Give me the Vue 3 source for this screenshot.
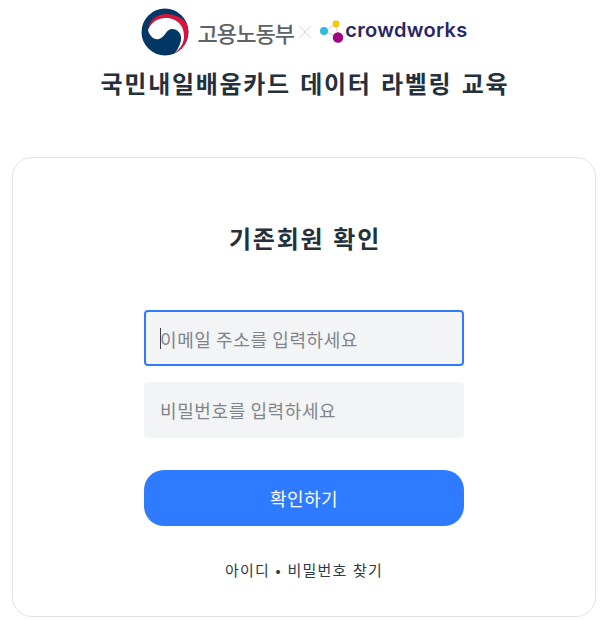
<script setup>
import { ref } from 'vue'

const email = ref('')
const password = ref('')
</script>

<template>
  <div class="page">
    <header class="head">
      <div class="logos">
        <svg class="emblem" width="48" height="48" viewBox="0 0 48 48">
          <circle cx="24" cy="24" r="23.500" fill="#003764" />
          <path d="M6.500 21C9 11 17 6 25 6C33 6 40 9 45 14A23.500 23.500 0 0 1 34 45.200C40 40 43.500 34 43 27.500C42 17 34 10 25 10C17 10 10 14 6.500 21z" fill="#d7143c" />
          <path d="M7 22C10 14 17 10 25 10C35 10 43 17 43 27.500C43.500 34 40 40 34 45C38 39.500 40.500 34 40 29C39.500 24 35 20.500 30 21C25 22 24 29 18 31C13 32.500 8.500 28 7 22z" fill="#fff" />
        </svg>
        <span class="moel">고용노동부</span>
        <svg class="times" width="14" height="14" viewBox="0 0 14 14">
          <path d="M1 1l12 12M13 1L1 13" stroke="#d4d6d9" stroke-width="1" fill="none" />
        </svg>
        <svg class="dots" width="26" height="26" viewBox="0 0 26 26">
          <path d="M5 13L17 6M5 13l14 6.500M17 6l2 13.500" stroke="#d9d3e2" stroke-width="1" fill="none" />
          <circle cx="5" cy="13" r="4" fill="#2fbcd6" />
          <circle cx="17" cy="6" r="3.400" fill="#f6c800" />
          <circle cx="19" cy="19.500" r="5.200" fill="#a0057f" />
        </svg>
        <span class="crowd">crowdworks</span>
      </div>
      <h1 class="course">국민내일배움카드 데이터 라벨링 교육</h1>
    </header>

    <main class="card">
      <h2 class="title">기존회원 확인</h2>
      <form class="form" @submit.prevent>
        <div class="field">
          <input v-model="email" class="input focused" type="text" placeholder="이메일 주소를 입력하세요" />
          <span class="caret"></span>
        </div>
        <div class="field">
          <input v-model="password" class="input" type="password" placeholder="비밀번호를 입력하세요" />
        </div>
        <button class="submit" type="submit">확인하기</button>
      </form>
      <a class="find" href="#" @click.prevent>아이디 • 비밀번호 찾기</a>
    </main>
  </div>
</template>

<style scoped>
.page {
  width: 608px;
  box-sizing: border-box;
  padding: 8px 12px 0;
  font-family: "Noto Sans CJK KR", "Noto Sans", sans-serif;
  color: #25303d;
}

.head {
  display: flex;
  flex-direction: column;
  align-items: center;
}

.logos {
  display: flex;
  align-items: center;
  height: 48px;
}

.emblem {
  margin-right: 9px;
}

.moel {
  font-size: 22px;
  font-weight: 500;
  color: #5f6265;
  letter-spacing: -0.9px;
}

.times {
  margin: 0 7px 0 4px;
}

.dots {
  margin-top: -2px;
}

.crowd {
  font-family: "Inter", "Noto Sans", sans-serif;
  font-size: 20px;
  font-weight: 600;
  color: #2a2569;
  letter-spacing: 0.3px;
  margin-top: -4px;
}

.course {
  margin: 9px 0 0 2px;
  font-size: 24px;
  line-height: 36px;
  font-weight: 700;
  letter-spacing: 1.7px;
  word-spacing: 2.300px;
  color: #25303d;
}

.card {
  margin-top: 56px;
  height: 460px;
  box-sizing: border-box;
  border: 1px solid #e2e4e8;
  border-radius: 20px;
  background: #fff;
  display: flex;
  flex-direction: column;
  align-items: center;
  padding-top: 62px;
}

.title {
  margin: 0 0 0 2px;
  font-size: 24px;
  line-height: 36px;
  font-weight: 700;
  letter-spacing: 1.7px;
  word-spacing: 2px;
  color: #25303d;
}

.form {
  width: 320px;
  margin-top: 54px;
  display: flex;
  flex-direction: column;
  gap: 16px;
}

.field {
  position: relative;
}

.input {
  display: block;
  width: 100%;
  height: 56px;
  box-sizing: border-box;
  padding: 0 16px;
  border: 0;
  border-radius: 4px;
  background: #f3f4f6;
  font-family: inherit;
  font-size: 18px;
  letter-spacing: 0.6px;
  color: #25303d;
  outline: none;
}

.input::placeholder {
  color: #80858c;
  opacity: 1;
}

.input.focused {
  border: 2px solid #2f7bff;
  padding: 1px 14px 0;
}

.caret {
  position: absolute;
  left: 16px;
  top: 18px;
  width: 1px;
  height: 21px;
  background: #3a3f45;
}

.submit {
  height: 56px;
  margin-top: 16px;
  border: 0;
  border-radius: 20px;
  background: #2f7bff;
  color: #fff;
  font-family: inherit;
  font-size: 18px;
  letter-spacing: 0.5px;
  cursor: pointer;
}

.find {
  margin-top: 32px;
  font-size: 15px;
  line-height: 24px;
  letter-spacing: 1.2px;
  word-spacing: 1px;
  color: #2f3945;
  text-decoration: none;
}
</style>

<style>
html, body {
  overflow: hidden;
  background: #fff;
}
</style>
